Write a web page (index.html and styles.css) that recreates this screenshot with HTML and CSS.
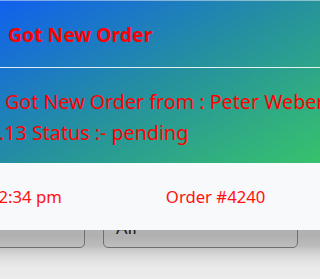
FILE: index.html
```html
<!DOCTYPE html>
<html>
<head>
<meta charset="utf-8">
<link rel="stylesheet" href="styles.css">
</head>
<body>
<div class="page">
  <div class="toolbar">
    <button class="btn btn-left" aria-label="Filter"></button>
    <button class="btn btn-select">All</button>
  </div>
</div>
<div class="modal">
  <div class="grad">
    <div class="modal-head">
      <h5 class="title">Got New Order</h5>
    </div>
    <div class="modal-body">
      <p class="msg">Got New Order from : Peter Weber<br>.13 Status :- pending</p>
    </div>
  </div>
  <div class="modal-foot">
    <span class="time">12:34 pm</span>
    <span class="order">Order #4240</span>
  </div>
</div>
</body>
</html>
```

FILE: styles.css
```css
html, body {
  margin: 0;
  padding: 0;
  overflow: hidden;
}
body {
  height: 279px;
  position: relative;
  font-family: "Noto Sans", "Open Sans", sans-serif;
  background: linear-gradient(to bottom,
    #aeaeae 0px, #b1b1b1 236px, #bcbcbc 246px, #cdcdcd 251px,
    #d9d9d9 256px, #e3e3e3 262px, #eaeaea 268px, #ececec 279px);
}
.page {
  padding-top: 200px;
}
.toolbar {
  display: flex;
  gap: 18px;
  margin-left: -20px;
}
.btn {
  box-sizing: border-box;
  height: 48px;
  background: transparent;
  border: 1px solid #6f6f6f;
  border-radius: 5px;
  font-family: "Noto Sans", sans-serif;
  font-size: 18px;
  color: #222;
  text-align: left;
  padding: 0 12px 11px;
  line-height: 1;
  display: flex;
  align-items: flex-end;
}
.btn-left {
  width: 105px;
}
.btn-select {
  width: 195px;
}
.modal {
  position: absolute;
  top: 0;
  left: -24px;
  width: 440px;
  overflow: hidden;
}
.grad {
  background: linear-gradient(150deg, #1160ee 12px, #25909f 163px, #38c26c 314px);
}
.modal-head {
  box-sizing: border-box;
  height: 68px;
  border-top: 1px solid rgba(255, 255, 255, 0.45);
  border-bottom: 1px solid rgba(255, 255, 255, 0.88);
  display: flex;
  align-items: center;
  padding-left: 32px;
}
.title {
  margin: 0;
  font-size: 19.4px;
  font-weight: 700;
  color: #ff0000;
  line-height: 1.2;
  padding-top: 1px;
}
.modal-body {
  box-sizing: border-box;
  height: 95px;
  padding: 18px 0 0 23px;
}
.msg {
  margin: 0;
  font-size: 19.7px;
  line-height: 31px;
  text-indent: 6px;
  color: #ff0000;
  white-space: nowrap;
}
.modal-foot {
  box-sizing: border-box;
  height: 67px;
  background: #f8f9fb;
  display: flex;
  align-items: center;
  padding-left: 13px;
  gap: 104px;
  font-size: 16.7px;
  color: #ff1111;
}
```
